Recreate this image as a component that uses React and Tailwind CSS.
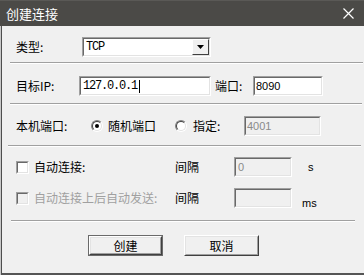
const CJK = "font-['Noto_Sans_CJK_SC',sans-serif]";

function Sunken({ className = "", inner = "bg-white", children }) {
  return (
    <div className={`border border-t-[#a0a0a0] border-l-[#a0a0a0] border-b-white border-r-white ${className}`}>
      <div className={`h-full w-full border border-t-[#696969] border-l-[#696969] border-b-[#e3e3e3] border-r-[#e3e3e3] flex items-center ${inner}`}>
        {children}
      </div>
    </div>
  );
}

function Sep({ className = "" }) {
  return <div className={`h-[2px] border-t border-t-[#a0a0a0] border-b border-b-white ${className}`} />;
}

function Radio({ checked }) {
  return (
    <div className="w-[12px] h-[12px] rounded-full border border-t-[#808080] border-l-[#808080] border-b-white border-r-white flex items-center justify-center">
      <div className="w-[10px] h-[10px] rounded-full border border-t-[#404040] border-l-[#404040] border-b-[#e3e3e3] border-r-[#e3e3e3] bg-white flex items-center justify-center">
        {checked && <div className="w-[4px] h-[4px] rounded-full bg-black" />}
      </div>
    </div>
  );
}

function Check({ disabled }) {
  return (
    <div className="w-[13px] h-[13px] border border-t-[#a0a0a0] border-l-[#a0a0a0] border-b-white border-r-white">
      <div className={`w-full h-full border border-t-[#696969] border-l-[#696969] border-b-[#e3e3e3] border-r-[#e3e3e3] ${disabled ? "bg-[#f0f0f0]" : "bg-white"}`} />
    </div>
  );
}

function Button({ label, def }) {
  const inner = (
    <div className="w-full h-full border border-t-white border-l-white border-b-[#404040] border-r-[#404040]">
      <div className={`w-full h-full border border-t-[#e3e3e3] border-l-[#e3e3e3] border-b-[#a0a0a0] border-r-[#a0a0a0] bg-[#f0f0f0] flex items-center justify-center text-[12px] text-black ${CJK}`}>
        {label}
      </div>
    </div>
  );
  return def ? (
    <div className="w-[75px] h-[21px] border border-[#6a6a6a]">{inner}</div>
  ) : (
    <div className="w-[75px] h-[21px]">{inner}</div>
  );
}

export default function App() {
  return (
    <div className="w-[364px] h-[275px] flex flex-col overflow-hidden bg-[#f0f0f0]">
      <div className="h-[26px] shrink-0 bg-[#4b4a47] border-t border-t-[#5a5956] flex items-center justify-between pl-[6px] pr-[10px]">
        <span className={`text-[13px] text-white leading-none ${CJK}`}>创建连接</span>
        <svg width="11" height="11" viewBox="0 0 11 11" className="mt-[-1px]">
          <path d="M0.5 0.5 L10.5 10.5 M10.5 0.5 L0.5 10.5" stroke="#ffffff" strokeWidth="1.2" />
        </svg>
      </div>
      <div className="flex-1 flex border-l border-l-[#c8c8c8]">
        <div className={`flex-1 flex flex-col border-l border-l-[#4e4e4e] border-b-2 border-b-[#555555] text-[12px] text-black ${CJK}`}>
          {/* Row 1 */}
          <div className="mt-[11px] h-[20px] flex items-center pl-[14px]">
            <span className="w-[66px]">类型:</span>
            <Sunken className="w-[129px] h-[20px]">
              <span className="flex-1 pl-[2px] font-['Liberation_Mono',monospace] text-[12px] tracking-[-1.2px]">TCP</span>
              <div className="w-[17px] h-full border border-t-white border-l-white border-b-[#404040] border-r-[#404040] bg-[#f0f0f0] flex items-center justify-center">
                <svg width="7" height="4" viewBox="0 0 7 4"><path d="M0 0 H7 L3.5 4 Z" fill="#000" /></svg>
              </div>
            </Sunken>
          </div>
          <Sep className="mt-[5px] ml-[8px] mr-[1px]" />
          {/* Row 2 */}
          <div className="mt-[12px] h-[20px] flex items-center pl-[14px]">
            <span className="w-[63px]">目标IP:</span>
            <Sunken className="w-[132px] h-[20px]">
              <span className="pl-[2px] font-['Liberation_Mono',monospace] text-[12px] tracking-[-1.2px]">127.0.0.1</span>
              <span className="ml-[2px] w-[1px] h-[13px] bg-black" />
            </Sunken>
            <span className="ml-[4px] w-[38px]">端口:</span>
            <Sunken className="w-[70px] h-[20px]">
              <span className="pl-[1px] font-['Liberation_Sans',sans-serif] text-[11px]">8090</span>
            </Sunken>
          </div>
          <Sep className="mt-[7px] ml-[8px] mr-[2px]" />
          {/* Row 3 */}
          <div className="mt-[11px] h-[20px] flex items-center pl-[14px]">
            <span className="w-[75px]">本机端口:</span>
            <Radio checked />
            <span className="ml-[5px] w-[67px]">随机端口</span>
            <Radio />
            <span className="ml-[6px] w-[51px]">指定:</span>
            <Sunken className="w-[77px] h-[20px]" inner="bg-[#f0f0f0]">
              <span className="pl-[1px] font-['Liberation_Sans',sans-serif] text-[11px] text-[#8a8a8a]">4001</span>
            </Sunken>
          </div>
          <Sep className="mt-[9px] ml-[6px] mr-[3px]" />
          {/* Row 4 */}
          <div className="mt-[10px] h-[20px] flex items-center pl-[14px]">
            <Check />
            <span className="ml-[5px] w-[141px]">自动连接:</span>
            <span className="w-[59px]">间隔</span>
            <Sunken className="w-[58px] h-[20px]" inner="bg-[#f0f0f0]">
              <span className="pl-[2px] font-['Liberation_Sans',sans-serif] text-[11px] text-[#8a8a8a]">0</span>
            </Sunken>
            <span className="ml-[16px] font-['Liberation_Sans',sans-serif] text-[11px]">s</span>
          </div>
          {/* Row 5 */}
          <div className="mt-[11px] h-[20px] flex items-center pl-[14px]">
            <Check disabled />
            <span className="ml-[5px] w-[141px] text-[#a0a0a0]">自动连接上后自动发送:</span>
            <span className="w-[59px]">间隔</span>
            <Sunken className="w-[58px] h-[20px]" inner="bg-[#f0f0f0]" />
            <span className="ml-[10px] mt-[10px] font-['Liberation_Sans',sans-serif] text-[11px]">ms</span>
          </div>
          <Sep className="mt-[12px] ml-[9px] mr-[9px]" />
          {/* Buttons */}
          <div className="mt-[13px] flex pl-[86px] gap-[21px]">
            <Button label="创建" def />
            <Button label="取消" />
          </div>
        </div>
      </div>
    </div>
  );
}
